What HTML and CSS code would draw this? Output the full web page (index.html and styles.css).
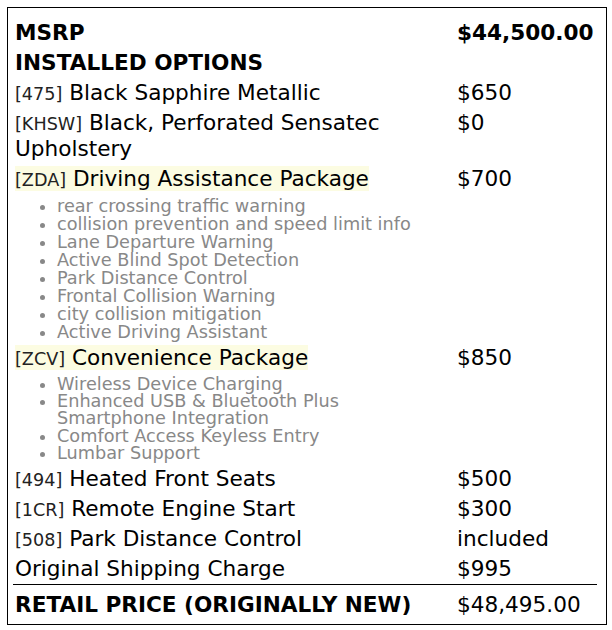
FILE: index.html
```
<!DOCTYPE html>
<html lang="en">
  <head>
    <meta charset="UTF-8" />
    <title>Window Sticker</title>
    <link rel="stylesheet" href="styles.css">
  </head>
  <body>
    <div class="sticker">
      <table class="price-table">
        <tr class="heading">
          <td class="item">MSRP</td>
          <td class="price">$44,500.00</td>
        </tr>
        <tr class="heading">
          <td class="item">INSTALLED OPTIONS</td>
          <td class="price"></td>
        </tr>
        <tr>
          <td class="item"><span class="code">[475]</span> Black Sapphire Metallic</td>
          <td class="price">$650</td>
        </tr>
        <tr>
          <td class="item"><span class="code">[KHSW]</span> Black, Perforated Sensatec Upholstery</td>
          <td class="price">$0</td>
        </tr>
        <tr>
          <td class="item">
            <span class="package"><span class="code">[ZDA]</span> Driving Assistance Package</span>
            <ul class="features">
              <li>rear crossing traffic warning</li>
              <li>collision prevention and speed limit info</li>
              <li>Lane Departure Warning</li>
              <li>Active Blind Spot Detection</li>
              <li>Park Distance Control</li>
              <li>Frontal Collision Warning</li>
              <li>city collision mitigation</li>
              <li>Active Driving Assistant</li>
            </ul>
          </td>
          <td class="price">$700</td>
        </tr>
        <tr>
          <td class="item">
            <span class="package"><span class="code">[ZCV]</span> Convenience Package</span>
            <ul class="features features-tight">
              <li>Wireless Device Charging</li>
              <li>Enhanced USB &amp; Bluetooth Plus Smartphone Integration</li>
              <li>Comfort Access Keyless Entry</li>
              <li>Lumbar Support</li>
            </ul>
          </td>
          <td class="price">$850</td>
        </tr>
        <tr>
          <td class="item"><span class="code">[494]</span> Heated Front Seats</td>
          <td class="price">$500</td>
        </tr>
        <tr>
          <td class="item"><span class="code">[1CR]</span> Remote Engine Start</td>
          <td class="price">$300</td>
        </tr>
        <tr>
          <td class="item"><span class="code">[508]</span> Park Distance Control</td>
          <td class="price">included</td>
        </tr>
        <tr>
          <td class="item">Original Shipping Charge</td>
          <td class="price">$995</td>
        </tr>
        <tr class="total">
          <td class="item">RETAIL PRICE (ORIGINALLY NEW)</td>
          <td class="price">$48,495.00</td>
        </tr>
      </table>
    </div>
  </body>
</html>
```

FILE: styles.css
```
* {
  box-sizing: border-box;
}

body {
  margin: 0;
  background-color: #fff;
  font-family: "DejaVu Sans", Verdana, sans-serif;
  color: #000;
}

.sticker {
  width: 600px;
  margin: 7px 0 0 7px;
  padding: 10px 9px 4px 5px;
  border: 1px solid #000;
}

.price-table {
  width: 100%;
  border-collapse: collapse;
  font-size: 21.6px;
  line-height: 26px;
}

.price-table td {
  padding: 2px;
  vertical-align: top;
}

.price-table .item {
  width: 442px;
}

.heading td {
  font-weight: bold;
}

.code {
  font-size: 17.6px;
  line-height: 1;
  color: #222;
}

.package {
  background-color: #fcfce2;
}

.features {
  margin: 5px 0 0;
  padding-left: 42px;
  font-size: 17.7px;
  line-height: 18px;
  color: #888;
}

.features-tight {
  line-height: 17.2px;
}

.total td {
  border-top: 1px solid #000;
  padding-top: 7px;
}

.total .item {
  font-weight: bold;
}
```
